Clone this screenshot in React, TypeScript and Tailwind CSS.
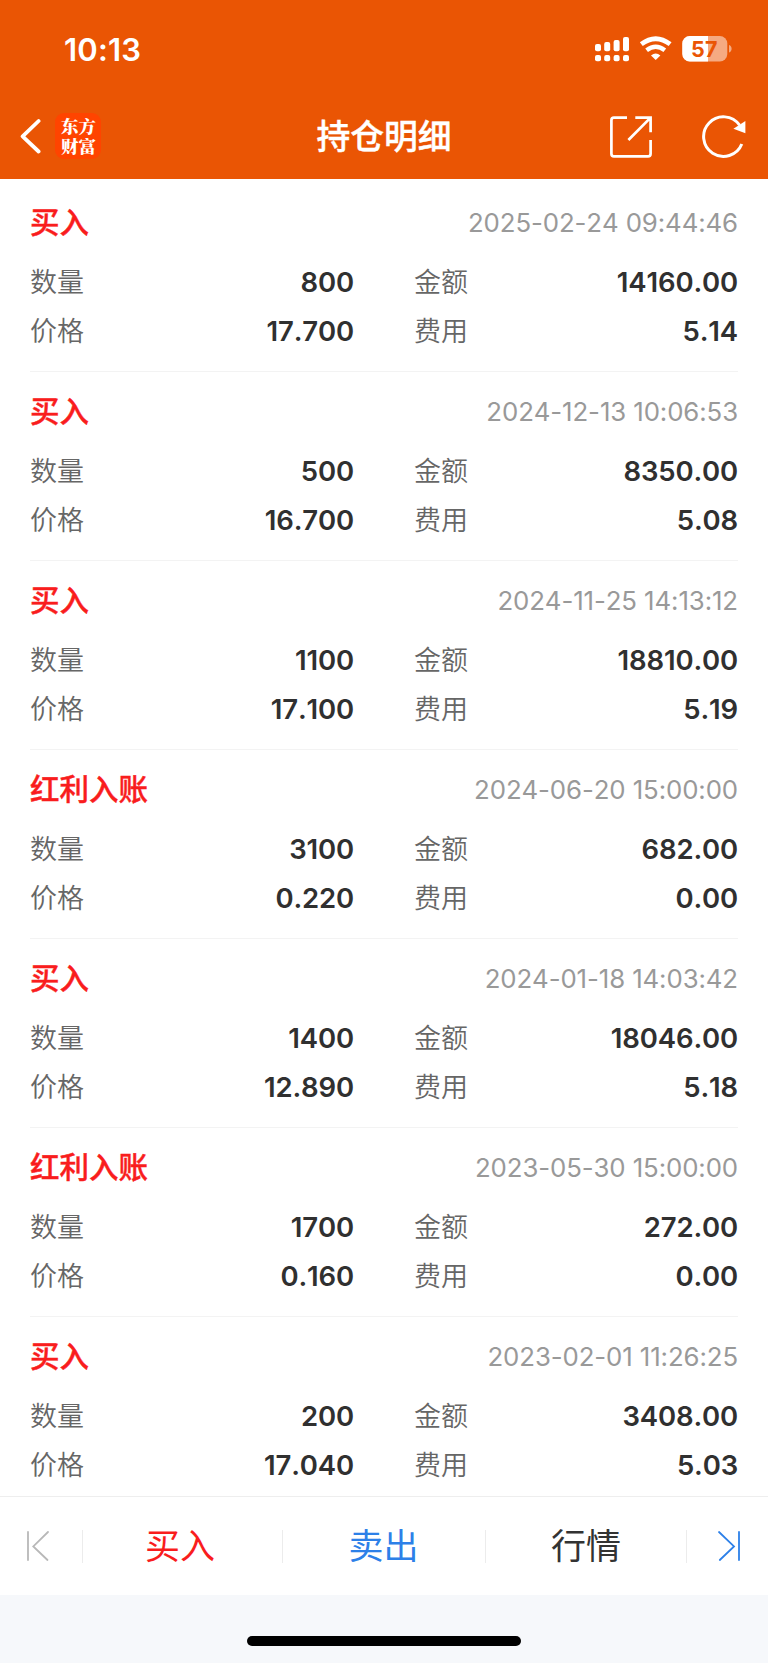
type Trade = {
  type: string;
  time: string;
  count: string;
  amount: string;
  price: string;
  fee: string;
};

const trades: Trade[] = [
  { type: '买入', time: '2025-02-24 09:44:46', count: '800', amount: '14160.00', price: '17.700', fee: '5.14' },
  { type: '买入', time: '2024-12-13 10:06:53', count: '500', amount: '8350.00', price: '16.700', fee: '5.08' },
  { type: '买入', time: '2024-11-25 14:13:12', count: '1100', amount: '18810.00', price: '17.100', fee: '5.19' },
  { type: '红利入账', time: '2024-06-20 15:00:00', count: '3100', amount: '682.00', price: '0.220', fee: '0.00' },
  { type: '买入', time: '2024-01-18 14:03:42', count: '1400', amount: '18046.00', price: '12.890', fee: '5.18' },
  { type: '红利入账', time: '2023-05-30 15:00:00', count: '1700', amount: '272.00', price: '0.160', fee: '0.00' },
  { type: '买入', time: '2023-02-01 11:26:25', count: '200', amount: '3408.00', price: '17.040', fee: '5.03' },
];

function StatusBar() {
  return (
    <div className="flex h-[98px] items-center justify-between pl-[64px] pr-[36px]">
      <span className="text-[31px] leading-none font-semibold tracking-[0.2px]">10:13</span>
      <svg width="138" height="28" viewBox="594 35 138 28" fill="#fff">
        {/* signal */}
        <rect x="595" y="44" width="6" height="7.2" rx="2" />
        <rect x="604.2" y="42" width="6" height="9.2" rx="2" />
        <rect x="613.6" y="40" width="6" height="11.2" rx="2" />
        <rect x="623" y="37" width="6" height="14.2" rx="2" />
        <rect x="595" y="55" width="6" height="6.2" rx="2" />
        <rect x="604.2" y="55" width="6" height="6.2" rx="2" />
        <rect x="613.6" y="55" width="6" height="6.2" rx="2" />
        <rect x="623" y="55" width="6" height="6.2" rx="2" />
        {/* wifi */}
        <path d="M641.3 44.2Q655.7 33.2 670.1 44.2" fill="none" stroke="#fff" strokeWidth="4.8" />
        <path d="M646.6 50.3Q655.7 43.2 664.8 50.3" fill="none" stroke="#fff" strokeWidth="4.4" />
        <path d="M651 55.6Q655.7 51.2 660.4 55.6L655.7 60Z" />
        {/* battery */}
        <rect x="682.3" y="36" width="45" height="25.4" rx="7.5" opacity="0.5" />
        <path d="M708 36H689.8A7.5 7.5 0 0 0 682.3 43.5V53.9A7.5 7.5 0 0 0 689.8 61.4H708Z" />
        <path d="M729 45C732.5 46 732.5 51.4 729 52.4Z" opacity="0.5" />
        <text x="704.3" y="56.6" textAnchor="middle" fontSize="21.5" fontWeight="700" letterSpacing="0.2" fill="#ea5504">57</text>
      </svg>
    </div>
  );
}

function NavBar() {
  return (
    <div className="flex h-[77px] items-center">
      <div className="flex w-[250px] items-center pb-px pl-[20px]">
        <svg width="24" height="40" viewBox="20 116 24 40" fill="none" stroke="#fff" strokeWidth="3.8" strokeLinecap="round" strokeLinejoin="round">
          <path d="M38.6 121L22.6 136.3L38.6 151.5" />
        </svg>
        <div className="ml-[11px] h-[46px] w-[46px] rounded-[9px] bg-[#ff4400] pt-[3px] pr-[4px] pl-[6px] text-[17.5px] leading-[19.5px] font-black break-all font-['Noto_Serif_CJK_SC','Noto_Sans_CJK_SC',sans-serif]">
          东方财富
        </div>
      </div>
      <h1 className="flex-1 pt-px text-center text-[33.8px] leading-none font-medium [-webkit-text-stroke:0.4px]">持仓明细</h1>
      <div className="flex w-[250px] items-center justify-end gap-[48px] pr-[20px]">
        <svg width="46" height="46" viewBox="608 114 46 46" fill="none" stroke="#fff" strokeWidth="2.7">
          <path d="M627 117.6H614A2.6 2.6 0 0 0 611.4 120.2V153.8A2.6 2.6 0 0 0 614 156.4H648A2.6 2.6 0 0 0 650.6 153.8V140" />
          <path d="M635.3 117.6H650.6V132.3M650.6 117.6L628.4 140" />
        </svg>
        <svg width="46" height="46" viewBox="702 114 46 46" fill="none" stroke="#fff" strokeWidth="3">
          <path d="M741.8 144A19.8 19.8 0 1 1 739.6 125.2" />
          <path d="M745.4 121V133.2L733.4 128.8Z" fill="#fff" stroke="none" />
        </svg>
      </div>
    </div>
  );
}

function Field({ label, value }: { label: string; value: string }) {
  return (
    <div className="flex h-[49px] items-center justify-between">
      <span className="text-[27px] font-[350] text-[#666]">{label}</span>
      <span className="pb-[2px] text-[27.5px] font-semibold tracking-[-0.15px] text-[#303030] [font-kerning:none]">{value}</span>
    </div>
  );
}

function TradeItem({ trade }: { trade: Trade }) {
  return (
    <div className="h-[189px] border-b border-[#f3f3f3] pt-[19px] leading-[40px]">
      <div className="flex h-[40px] items-center justify-between">
        <span className="text-[29.5px] font-medium text-[#f91d1d] [-webkit-text-stroke:0.4px]">{trade.type}</span>
        <span className="pt-[2px] text-[25.8px] tracking-[-0.1px] text-[#999] [font-kerning:none]">{trade.time}</span>
      </div>
      <div className="mt-[16px] grid grid-cols-2 gap-x-[60px]">
        <Field label="数量" value={trade.count} />
        <Field label="金额" value={trade.amount} />
        <Field label="价格" value={trade.price} />
        <Field label="费用" value={trade.fee} />
      </div>
    </div>
  );
}

function Divider() {
  return <div className="h-[33px] w-px bg-[#ececec]" />;
}

function BottomBar() {
  return (
    <div className="flex h-[99px] items-center border-t border-[#eee] bg-white text-[35px] leading-none">
      <div className="flex w-[82px] justify-center pr-[7px]">
        <svg width="24" height="32" viewBox="0 0 24 32" fill="none" stroke="#b8b8b8" strokeWidth="1.8" strokeLinecap="round">
          <path d="M2 2V30M22 2L7.3 16.4L21.5 30" />
        </svg>
      </div>
      <Divider />
      <div className="w-[199px] pr-[5px] text-center text-[#f91d1d]">买入</div>
      <Divider />
      <div className="w-[202px] pr-px text-center text-[#2d80e8]">卖出</div>
      <Divider />
      <div className="w-[200px] text-center text-[#333]">行情</div>
      <Divider />
      <div className="flex w-[81px] justify-center pl-[3px]">
        <svg width="24" height="32" viewBox="0 0 24 32" fill="none" stroke="#2d80e8" strokeWidth="1.8" strokeLinecap="round">
          <path d="M2 2L17 16.4L2.8 30M22 2V30" />
        </svg>
      </div>
    </div>
  );
}

export default function App() {
  return (
    <div className="flex h-[1663px] w-[768px] flex-col overflow-hidden bg-white font-['Inter','Noto_Sans_CJK_SC',sans-serif]">
      <header className="h-[179px] shrink-0 bg-[#ea5504] text-white">
        <StatusBar />
        <NavBar />
      </header>
      <main className="h-[1317px] shrink-0 overflow-hidden px-[30px] pt-[4px]">
        {trades.map((trade) => (
          <TradeItem key={trade.time} trade={trade} />
        ))}
      </main>
      <BottomBar />
      <div className="flex flex-1 justify-center bg-[#f6f8fb] pt-[41px]">
        <div className="h-[10px] w-[274px] rounded-full bg-black" />
      </div>
    </div>
  );
}
